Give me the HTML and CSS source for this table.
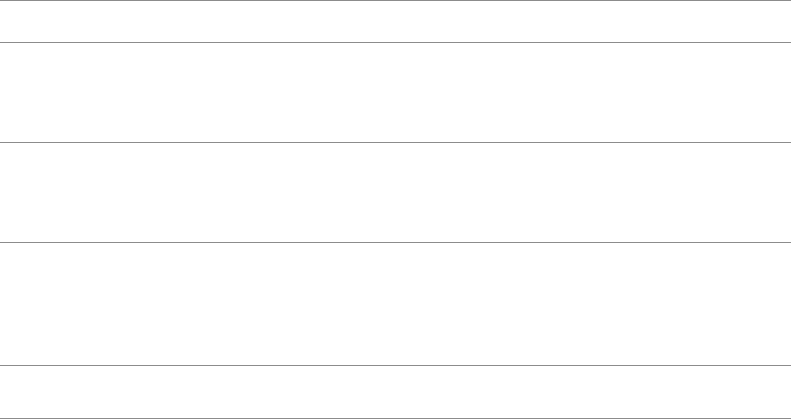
FILE: index.html
```html
<!DOCTYPE html>
<html>
<head>
<meta charset="utf-8">
<link rel="stylesheet" href="styles.css">
</head>
<body>
<div class="list">
  <div class="row r1"></div>
  <div class="row r2"></div>
  <div class="row r3"></div>
  <div class="row r4"></div>
  <div class="row r5"></div>
</div>
</body>
</html>
```
FILE: styles.css
```css
html, body {
  margin: 0;
  padding: 0;
  background: #fff;
  font-family: "Liberation Sans", Arial, sans-serif;
}
.list {
  width: 791px;
  display: flex;
  flex-direction: column;
  border-top: 1px solid #8c8c8c;
}
.row {
  border-bottom: 1px solid #8c8c8c;
  box-sizing: border-box;
}
.r1 { height: 42px; }
.r2 { height: 100px; }
.r3 { height: 100px; }
.r4 { height: 123px; }
.r5 { height: 53px; }
```
